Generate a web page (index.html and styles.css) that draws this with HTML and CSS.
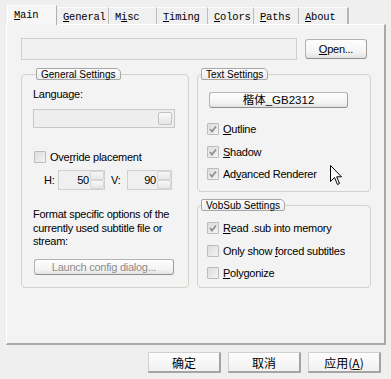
FILE: index.html
```html
<!DOCTYPE html>
<html lang="en">
<head>
  <meta charset="UTF-8" />
  <title>Subtitle Settings</title>
  <link rel="stylesheet" href="styles.css">
</head>
<body>
  <div class="dialog">
    <div class="tabs">
      <div class="tab active"><u>M</u>ain</div>
      <div class="tab"><u>G</u>eneral</div>
      <div class="tab">M<u>i</u>sc</div>
      <div class="tab"><u>T</u>iming</div>
      <div class="tab"><u>C</u>olors</div>
      <div class="tab"><u>P</u>aths</div>
      <div class="tab last"><u>A</u>bout</div>
    </div>

    <div class="panel">
      <div class="file-row">
        <div class="field"></div>
        <button class="btn open-btn"><u>O</u>pen...</button>
      </div>

      <div class="columns">
        <div class="group general">
          <div class="group-label">General Settings</div>
          <div class="text lang">Language:</div>
          <div class="combo"><span class="combo-btn"></span></div>
          <label class="check override"><span class="box"></span><span>Ove<u>r</u>ride placement</span></label>
          <div class="spin-row">
            <span class="spin-label">H:</span>
            <div class="spin h"><span class="spin-val">50</span><span class="spin-btns"><i></i><i></i></span></div>
            <span class="spin-label v">V:</span>
            <div class="spin v"><span class="spin-val">90</span><span class="spin-btns"><i></i><i></i></span></div>
          </div>
          <p class="text note">Format specific options of the currently used subtitle file or stream:</p>
          <button class="btn launch" disabled>Launch config dialog...</button>
        </div>

        <div class="right-col">
          <div class="group text-set">
            <div class="group-label">Text Settings</div>
            <button class="btn font-btn">楷体_GB2312</button>
            <div class="checks">
              <label class="check"><span class="box on"></span><span><u>O</u>utline</span></label>
              <label class="check"><span class="box on"></span><span><u>S</u>hadow</span></label>
              <label class="check"><span class="box on"></span><span>Ad<u>v</u>anced Renderer</span></label>
            </div>
          </div>
          <div class="group vobsub">
            <div class="group-label">VobSub Settings</div>
            <div class="checks">
              <label class="check"><span class="box on"></span><span><u>R</u>ead .sub into memory</span></label>
              <label class="check"><span class="box"></span><span>Only show <u>f</u>orced subtitles</span></label>
              <label class="check"><span class="box"></span><span><u>P</u>olygonize</span></label>
            </div>
          </div>
        </div>
      </div>
    </div>

    <div class="footer">
      <button class="btn cjk">确定</button>
      <button class="btn cjk">取消</button>
      <button class="btn cjk">应用(<u>A</u>)</button>
    </div>

    <svg class="cursor" width="13" height="21" viewBox="0 0 13 21">
      <path d="M0.5 0.5 L0.5 16.5 L4.5 12.5 L7.5 19.5 L9.5 18.5 L6.7 11.8 L11.5 11.8 Z" fill="#fff" stroke="#000" stroke-width="1"/>
    </svg>
  </div>
</body>
</html>
```

FILE: styles.css
```css
* {
  box-sizing: border-box;
  margin: 0;
  padding: 0;
}

body {
  background: #efefef;
  font-family: 'Liberation Sans', Arial, sans-serif;
  font-size: 11px;
  letter-spacing: -0.25px;
  color: #000;
}

.dialog {
  position: relative;
  width: 391px;
  height: 379px;
  padding-top: 5px;
}

/* tab strip */
.tabs {
  display: flex;
  align-items: flex-end;
  margin-left: 7px;
  height: 19px;
}

.tab {
  height: 17px;
  padding: 0 6px;
  font-family: 'Liberation Mono', monospace;
  font-size: 10.5px;
  letter-spacing: -0.2px;
  line-height: 18px;
  border-top: 1px solid #fbfbfb;
  border-right: 1px solid #bdbdbd;
  background: #f0f0f0;
  width: 50px;
}
.tab:nth-child(2) { width: 52px; }
.tab:nth-child(3) { width: 48px; }
.tab:nth-child(4) { width: 51px; }
.tab:nth-child(5) { width: 46px; }
.tab:nth-child(6) { width: 45px; }
.tab.last { width: 50px; border-right: 2px solid #b5b5b5; }

.tab.active {
  height: 20px;
  line-height: 19px;
  width: 50px;
  padding-left: 6px;
  background: #f6f6f6;
  border: 1px solid #fff;
  border-right: 1px solid #b0b0b0;
  border-bottom: none;
  margin-bottom: -1px;
  position: relative;
  z-index: 1;
}

/* page */
.panel {
  margin: 0 5px 0 6px;
  height: 321px;
  background: #f3f3f3;
  border-top: 1px solid #fff;
  border-left: 1px solid #fff;
  border-right: 2px solid #a9a9a9;
  border-bottom: 2px solid #a9a9a9;
  padding: 13px 0 0 14px;
}

.file-row {
  display: flex;
  align-items: flex-start;
}

.field {
  width: 276px;
  height: 22px;
  background: #f1f1f1;
  border: 1px solid #cfcfcf;
}

.btn {
  font-family: 'Liberation Sans', Arial, sans-serif;
  font-size: 11px;
  letter-spacing: -0.25px;
  color: #000;
  background: linear-gradient(#fefefe, #f3f3f3 70%, #e2e2e2);
  border: 1px solid #b4b4b4;
  border-right-color: #9e9e9e;
  border-bottom-color: #8f8f8f;
  border-radius: 3px;
}

.open-btn {
  width: 62px;
  height: 20px;
  margin: 1px 0 0 8px;
}

.columns {
  display: flex;
  margin-top: 14px;
}

/* group boxes */
.group {
  border: 1px solid #d2d2c8;
  border-radius: 4px;
  display: flex;
  flex-direction: column;
  align-items: flex-start;
}

.group-label {
  height: 12px;
  margin: -7px 0 0 3px;
  padding: 0 4px;
  font-size: 10px;
  letter-spacing: 0;
  line-height: 11px;
  background: linear-gradient(#fdfdfd, #ececec);
  border: 1px solid #a7a7a7;
  border-radius: 2px 5px 2px 2px;
}

.general {
  width: 168px;
  height: 214px;
  padding-left: 11px;
}

.text {
  line-height: 14px;
}

.lang {
  margin-top: 7px;
}

.combo {
  width: 142px;
  height: 19px;
  margin-top: 8px;
  background: #eeeeee;
  border: 1px solid #c8c8c8;
  display: flex;
  justify-content: flex-end;
  align-items: center;
  padding-right: 2px;
}

.combo-btn {
  width: 14px;
  height: 13px;
  border: 1px solid #c3c3c3;
  border-radius: 2px;
  background: linear-gradient(#fafafa, #e4e4e4);
}

.check {
  display: flex;
  align-items: center;
  height: 14px;
  line-height: 14px;
  white-space: nowrap;
}

.box {
  width: 12px;
  height: 12px;
  margin-right: 4px;
  border: 1px solid #bdbdbd;
  border-radius: 1px;
  background: linear-gradient(135deg, #dcdcdc, #f4f4f4);
  flex-shrink: 0;
}

.box.on {
  background:
    url("data:image/svg+xml,%3Csvg xmlns='http://www.w3.org/2000/svg' width='10' height='10'%3E%3Cpath d='M2 5 L4 7.5 L8 2.5' fill='none' stroke='%23909090' stroke-width='1.8'/%3E%3C/svg%3E") center / 10px 10px no-repeat,
    linear-gradient(135deg, #dcdcdc, #f4f4f4);
}

.override {
  margin: 22px 0 0 1px;
}

.spin-row {
  display: flex;
  align-items: center;
  height: 20px;
  margin-top: 6px;
  padding-left: 11px;
}

.spin-label {
  width: 14px;
}

.spin-label.v {
  width: 16px;
  margin-left: 6px;
}

.spin {
  display: flex;
  height: 20px;
  border: 1px solid #d0d0d0;
  background: #f0f0f0;
}

.spin.h { width: 47px; }
.spin.v { width: 45px; }

.spin-val {
  flex: 1;
  text-align: right;
  line-height: 18px;
  padding-right: 1px;
}

.spin-btns {
  display: flex;
  flex-direction: column;
  width: 14px;
}

.spin-btns i {
  flex: 1;
  border: 1px solid #d6d6d6;
  background: linear-gradient(#f8f8f8, #e6e6e6);
  border-radius: 2px;
}

.note {
  margin-top: 18px;
  width: 150px;
  line-height: 13.5px;
}

.launch {
  width: 140px;
  height: 16px;
  margin: 10px 0 0 1px;
  color: #8d8d8d;
  line-height: 12px;
}

.right-col {
  display: flex;
  flex-direction: column;
  margin-left: 8px;
}

.text-set {
  width: 174px;
  height: 118px;
}

.font-btn {
  width: 139px;
  height: 16px;
  margin: 12px 0 0 11px;
  font-family: 'Liberation Sans', 'Noto Sans CJK SC', sans-serif;
  font-size: 11.5px;
  letter-spacing: 0;
  line-height: 12px;
}

.checks {
  display: flex;
  flex-direction: column;
  padding-left: 9px;
}

.checks .check {
  height: 22.5px;
}

.text-set .checks {
  margin-top: 10px;
}

.vobsub {
  width: 174px;
  height: 83px;
  margin-top: 13px;
}

.vobsub .checks {
  margin-top: 6px;
}

/* dialog buttons */
.footer {
  display: flex;
  justify-content: flex-end;
  gap: 7px;
  margin: 7px 10px 0 0;
}

.btn.cjk {
  width: 73px;
  height: 21px;
  font-family: 'Noto Sans CJK SC', sans-serif;
  font-size: 12px;
  letter-spacing: 0;
  border-radius: 0;
  border: 1px solid #d0d0d0;
  border-right: 2px solid #a4a4a4;
  border-bottom: 2px solid #a4a4a4;
  background: linear-gradient(#fdfdfd, #f1f1f1);
}

.cursor {
  position: absolute;
  left: 330px;
  top: 165px;
}
```
